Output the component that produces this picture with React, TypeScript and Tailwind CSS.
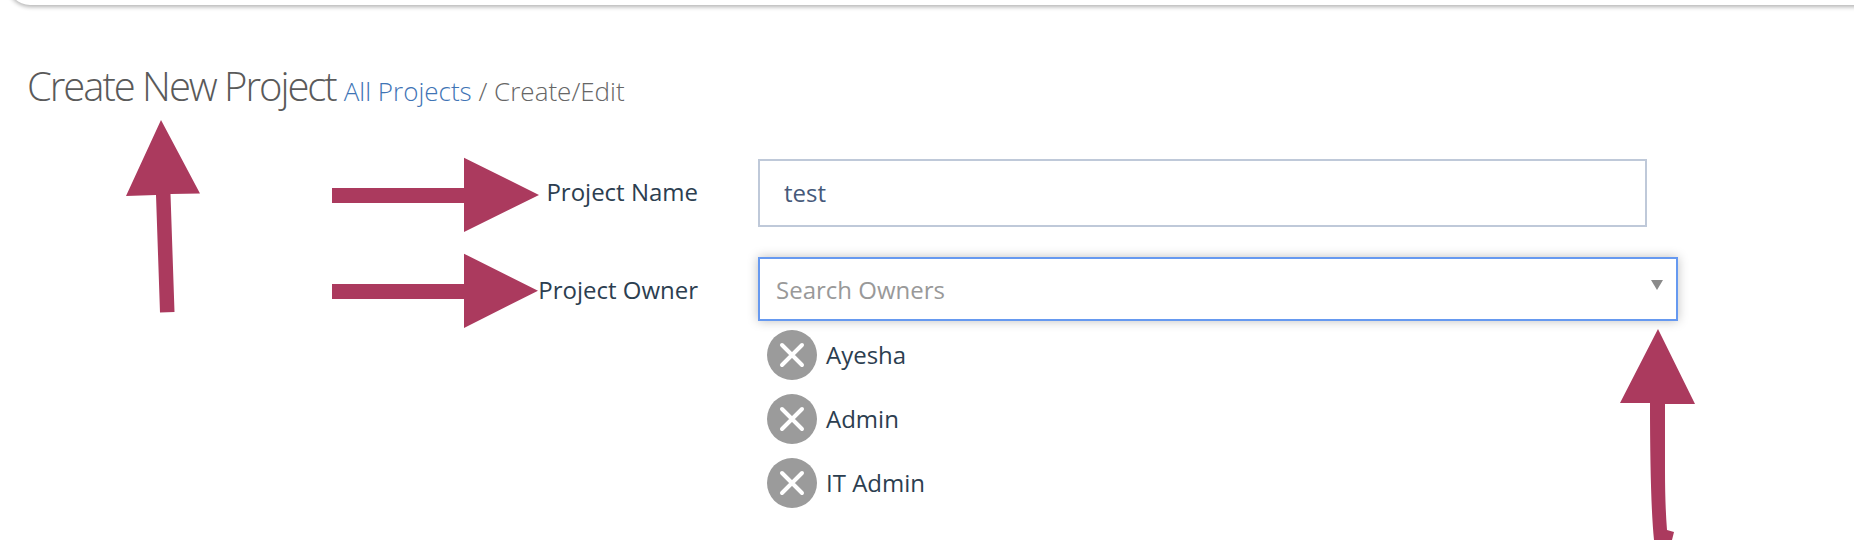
const font = { fontFamily: '"Open Sans", sans-serif' };

function Chip({ name }: { name: string }) {
  return (
    <div className="flex h-[50px] items-center gap-[9px]">
      <span className="flex h-[50px] w-[50px] items-center justify-center rounded-full bg-[#9b9b9b]">
        <svg width="26" height="26" viewBox="0 0 26 26" fill="none" stroke="#ffffff" strokeWidth="4" strokeLinecap="round">
          <path d="M3 3 L23 23 M23 3 L3 23" />
        </svg>
      </span>
      <span className="text-[24px] text-[#2c3e50]">{name}</span>
    </div>
  );
}

function Arrows() {
  return (
    <svg className="absolute left-0 top-0" width="1854" height="540" fill="#ab3a5e">
      <path d="M161 120 L200 193.5 L170.5 194 L174.5 312 L160 312.5 L156 195 L126 196 Z" />
      <path d="M332 188 H464 V157.7 L539 195 L464 232 V203 H332 Z" />
      <path d="M332 284 H464 V253.7 L538 290.7 L464 328 V299 H332 Z" />
      <path d="M1658 329 L1695 404 L1665 404 L1665 470 Q1665 505 1667 530 L1674 532 L1672 540 L1654 540 Q1650 500 1650 403 L1620 403 Z" />
    </svg>
  );
}

export default function App() {
  return (
    <div className="relative h-[540px] w-[1854px] overflow-hidden bg-white" style={font}>
      <div className="-mr-[30px] -mt-[25px] ml-[8px] h-[30px] rounded-b-[22px] bg-white shadow-[0_2px_4px_rgba(0,0,0,0.3)]" />

      <div className="flex items-baseline pl-[27px] pt-[57px]">
        <h1 className="text-[40px] leading-[48px] font-light tracking-[-2.03px] text-[#5a5a5a]">Create New Project</h1>
        <div className="ml-[8px] text-[26px] font-light text-[#666666]">
          <a className="text-[#3f74b5]">All Projects</a> / Create/Edit
        </div>
      </div>

      <div className="mt-[48px] grid grid-cols-[671px_920px] gap-x-[60px] gap-y-[30px] pl-[27px]">
        <div className="flex h-[68px] items-center justify-end pb-[2px] text-[24px] text-[#2c3e50]">Project Name</div>
        <div className="flex h-[68px] w-[889px] items-center border-2 border-[#bfc9d9] pl-[24px] text-[24px] text-[#46597a]">test</div>

        <div className="flex h-[64px] items-center justify-end pt-[2px] text-[24px] text-[#2c3e50]">Project Owner</div>
        <div>
          <div className="relative flex h-[64px] w-[920px] items-center border-2 border-[#6699f0] pl-[16px] pt-[2px] text-[24px] text-[#999999] shadow-[0_0_10px_rgba(0,0,0,0.25)]">
            Search Owners
            <span className="absolute right-[13px] top-[21px] h-0 w-0 border-x-[6px] border-t-[10px] border-x-transparent border-t-[#8a8a8a]" />
          </div>
          <div className="mt-[9px] flex flex-col gap-[14px] pl-[9px]">
            <Chip name="Ayesha" />
            <Chip name="Admin" />
            <Chip name="IT Admin" />
          </div>
        </div>
      </div>

      <Arrows />
    </div>
  );
}
